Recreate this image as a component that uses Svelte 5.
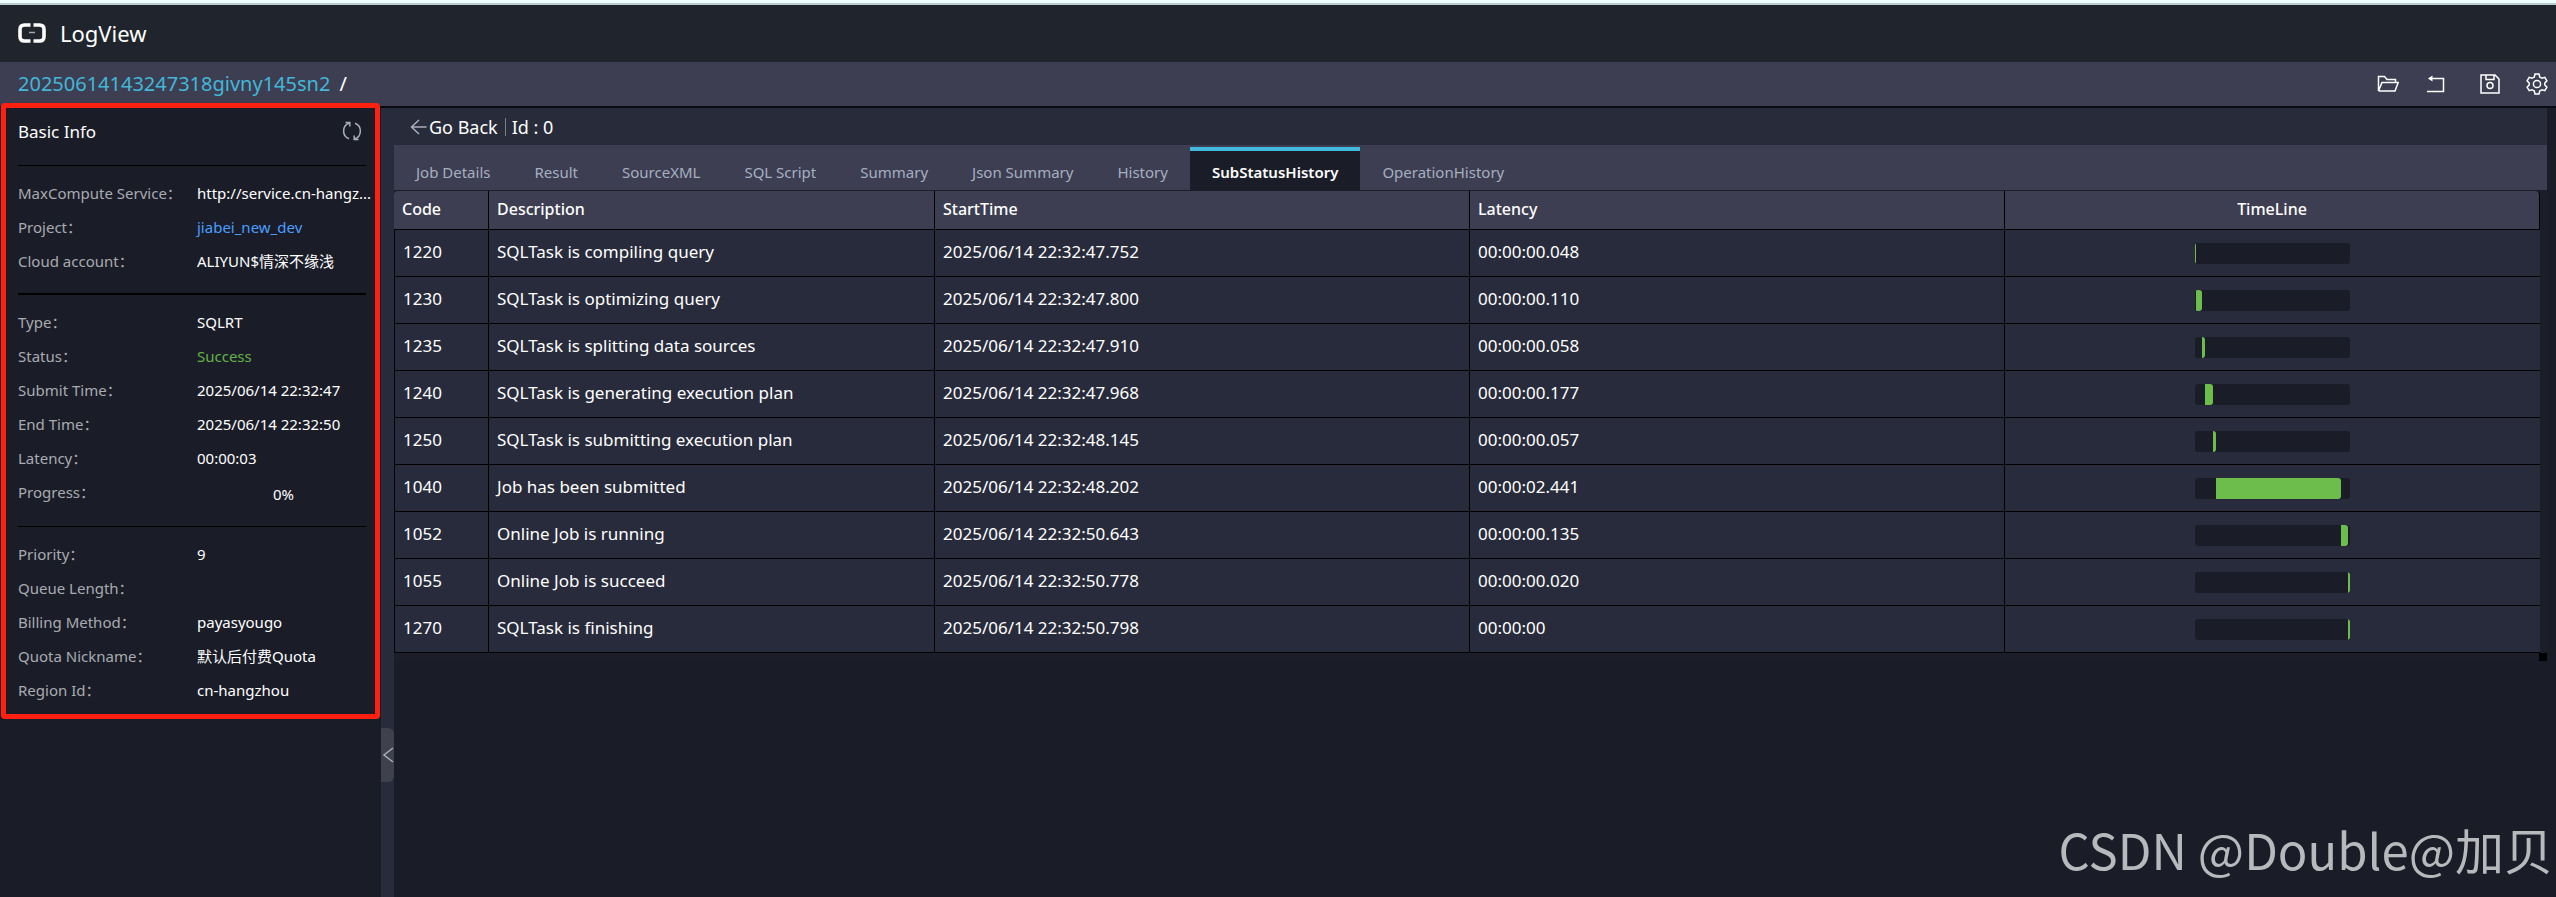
<script>
  const sections = [
    [
      { label: 'MaxCompute Service', value: 'http://service.cn-hangz...' },
      { label: 'Project', value: 'jiabei_new_dev', kind: 'link' },
      { label: 'Cloud account', value: 'ALIYUN$情深不缘浅' },
    ],
    [
      { label: 'Type', value: 'SQLRT' },
      { label: 'Status', value: 'Success', kind: 'success' },
      { label: 'Submit Time', value: '2025/06/14 22:32:47' },
      { label: 'End Time', value: '2025/06/14 22:32:50' },
      { label: 'Latency', value: '00:00:03' },
      { label: 'Progress', value: '0%', kind: 'progress' },
    ],
    [
      { label: 'Priority', value: '9' },
      { label: 'Queue Length', value: '' },
      { label: 'Billing Method', value: 'payasyougo' },
      { label: 'Quota Nickname', value: '默认后付费Quota' },
      { label: 'Region Id', value: 'cn-hangzhou' },
    ],
  ]

  const tabs = [
    'Job Details', 'Result', 'SourceXML', 'SQL Script', 'Summary',
    'Json Summary', 'History', 'SubStatusHistory', 'OperationHistory',
  ]
  let active = $state('SubStatusHistory')

  // offset and span are percentages of the whole run
  const rows = [
    { code: 1220, desc: 'SQLTask is compiling query', start: '2025/06/14 22:32:47.752', latency: '00:00:00.048', offset: 0, span: 0.7 },
    { code: 1230, desc: 'SQLTask is optimizing query', start: '2025/06/14 22:32:47.800', latency: '00:00:00.110', offset: 0.7, span: 3.8 },
    { code: 1235, desc: 'SQLTask is splitting data sources', start: '2025/06/14 22:32:47.910', latency: '00:00:00.058', offset: 4.4, span: 2 },
    { code: 1240, desc: 'SQLTask is generating execution plan', start: '2025/06/14 22:32:47.968', latency: '00:00:00.177', offset: 6.3, span: 5.3 },
    { code: 1250, desc: 'SQLTask is submitting execution plan', start: '2025/06/14 22:32:48.145', latency: '00:00:00.057', offset: 11.5, span: 2 },
    { code: 1040, desc: 'Job has been submitted', start: '2025/06/14 22:32:48.202', latency: '00:00:02.441', offset: 13.4, span: 80.8 },
    { code: 1052, desc: 'Online Job is running', start: '2025/06/14 22:32:50.643', latency: '00:00:00.135', offset: 94.1, span: 4.6 },
    { code: 1055, desc: 'Online Job is succeed', start: '2025/06/14 22:32:50.778', latency: '00:00:00.020', offset: 98.5, span: 1.5 },
    { code: 1270, desc: 'SQLTask is finishing', start: '2025/06/14 22:32:50.798', latency: '00:00:00', offset: 98.5, span: 1.5 },
  ]
</script>

<div class="page">
  <header class="brand">
    <svg class="logo" width="28" height="20" viewBox="0 0 28 20" aria-hidden="true">
      <path d="M12.5 2H6.5Q2 2 2 6.5V13.5Q2 18 6.5 18H12.5" />
      <path d="M15.5 2H21.5Q26 2 26 6.5V13.5Q26 18 21.5 18H15.5" />
      <path class="dash" d="M11 9.5H17" />
    </svg>
    <span>LogView</span>
  </header>

  <nav class="crumbs">
    <div class="path"><a href="#instance">20250614143247318givny145sn2</a><span>/</span></div>
    <div class="tools">
      <button aria-label="Open">
        <svg width="22" height="22" viewBox="0 0 22 22"><path d="M1.5 18V3.500H7.5L10 6.500H18.500V9.500M1.500 18L5 9.500H21.200L18 18H1.500" /></svg>
      </button>
      <button aria-label="Return">
        <svg width="22" height="22" viewBox="0 0 22 22"><path d="M5 5.500H19.500V18.500H3" /><path class="solid" d="M4 5.500L8.500 2.500V8.500Z" /></svg>
      </button>
      <button aria-label="Save" class="spaced">
        <svg width="22" height="22" viewBox="0 0 22 22"><path d="M2 2H16L20 6V20H2ZM7 2V6.500H15V2" /><circle cx="11" cy="12.500" r="3" /></svg>
      </button>
      <button aria-label="Settings">
        <svg width="22" height="22" viewBox="0 0 22 22"><path d="M9 1H13L13.700 4L16 5.300L18.800 4.400L20.900 7.900L18.800 10V12L20.900 14.100L18.800 17.600L16 16.700L13.700 18L13 21H9L8.300 18L6 16.700L3.200 17.600L1.100 14.100L3.200 12V10L1.100 7.900L3.200 4.400L6 5.300L8.300 4Z" /><circle cx="11" cy="11" r="3.600" /></svg>
      </button>
    </div>
  </nav>

  <div class="body">
    <aside>
      <div class="highlight"></div>
      <div class="title">
        <h2>Basic Info</h2>
        <button aria-label="Refresh">
          <svg width="20" height="20" viewBox="0 0 20 20"><path d="M7.500 2A8.300 8.300 0 0 0 7 17.700M12.500 18A8.300 8.300 0 0 0 13 2.300" /><path d="M3.500 1.500H7.800V5.500M16.500 18.500H12.200V14.500" /></svg>
        </button>
      </div>
      {#each sections as section}
        <dl>
          {#each section as item}
            <div class="info">
              <dt>{item.label}：</dt>
              <dd class={item.kind}>
                {#if item.kind === 'link'}<a href="#project">{item.value}</a>{:else}{item.value}{/if}
              </dd>
            </div>
          {/each}
        </dl>
      {/each}
    </aside>

    <div class="gutter">
      <button aria-label="Collapse">
        <svg width="13" height="18" viewBox="0 0 13 18"><path d="M12 2L3 9L12 16" /></svg>
      </button>
    </div>

    <main>
      <div class="back">
        <button>
          <svg width="18" height="16" viewBox="0 0 18 16"><path d="M16.500 8H1.500M9 1L1.500 8L9 15" /></svg>Go Back
        </button>
        <span class="sep"></span>
        <span>Id : 0</span>
      </div>

      <div class="tabs" role="tablist">
        {#each tabs as tab}
          <button role="tab" aria-selected={active === tab} class:active={active === tab} onclick={() => (active = tab)}>{tab}</button>
        {/each}
      </div>

      <div class="table-wrap">
        <table>
          <thead>
            <tr>
              <th class="code">Code</th>
              <th class="desc">Description</th>
              <th>StartTime</th>
              <th>Latency</th>
              <th class="timeline">TimeLine</th>
            </tr>
          </thead>
          <tbody>
            {#each rows as row}
              <tr>
                <td>{row.code}</td>
                <td>{row.desc}</td>
                <td>{row.start}</td>
                <td>{row.latency}</td>
                <td>
                  <div class="track">
                    <div class="fill" style="margin-left: {row.offset}%; width: {row.span}%"></div>
                  </div>
                </td>
              </tr>
            {/each}
          </tbody>
        </table>
        <div class="corner"></div>
      </div>
    </main>
  </div>

  <div class="watermark">CSDN @Double@加贝</div>
</div>

<style>
  :global(body) {
    background: #1a1d28;
  }

  .page {
    position: relative;
    display: flex;
    flex-direction: column;
    min-height: 100vh;
    box-sizing: border-box;
    border-top: 3px solid #effdfd;
    color: #fff;
    font-family: "Noto Sans", "Noto Sans CJK SC", sans-serif;
    font-size: 15px;
  }

  button {
    padding: 0;
    border: 0;
    background: none;
    color: inherit;
    font: inherit;
    cursor: pointer;
  }

  a {
    text-decoration: none;
  }

  svg {
    display: block;
    fill: none;
    stroke: #fff;
    stroke-width: 1.5;
  }

  .logo {
    stroke-width: 3.6;
  }

  .logo .dash {
    stroke: #a3a6ab;
    stroke-width: 1.5;
  }

  .brand {
    display: flex;
    align-items: center;
    gap: 14px;
    height: 55px;
    padding: 0 18px 2px;
    border-top: 2px solid #b9cdcd;
    background: #20242c;
    font-size: 22px;
  }

  .crumbs {
    display: flex;
    align-items: center;
    justify-content: space-between;
    height: 43px;
    padding: 0 8px 1px 18px;
    border-bottom: 2px solid #0a0b12;
    background: #3d3e52;
    font-size: 20px;
  }

  .crumbs a {
    color: #42b7d9;
  }

  .path {
    display: flex;
    gap: 9px;
  }

  .tools {
    display: flex;
    gap: 25px;
  }

  .tools .spaced {
    margin-left: 8px;
  }

  .tools .solid {
    fill: #fff;
    stroke: none;
  }

  .body {
    flex: 1;
    display: flex;
  }

  aside {
    position: relative;
    width: 381px;
    padding: 0 15px 0 18px;
    box-sizing: border-box;
    background: #1a1d28;
  }

  .highlight {
    position: absolute;
    inset: -5px 1px auto 1px;
    height: 606px;
    border: 5px solid #ff2010;
    border-radius: 4px;
    pointer-events: none;
  }

  .title {
    display: flex;
    align-items: center;
    justify-content: space-between;
    height: 46px;
    padding: 0 4px 11px 0;
  }

  h2 {
    margin: 0;
    font-size: 17px;
    font-weight: 400;
  }

  .title svg,
  .gutter svg,
  .back svg {
    stroke: #a9afba;
  }

  dl {
    margin: 0;
    padding: 10px 0 15px;
    border-top: 1px solid #000;
  }

  dl:nth-of-type(2) {
    padding-bottom: 17px;
    border-top-width: 2px;
  }

  .info {
    display: flex;
    height: 34px;
    line-height: 34px;
  }

  dt {
    width: 179px;
    flex: none;
    color: #a9abb0;
  }

  dd {
    flex: 1;
    margin: 0;
    white-space: nowrap;
  }

  dd a {
    color: #4a9dff;
  }

  .success {
    color: #62b146;
  }

  .progress {
    padding: 2px 0 0 4px;
    text-align: center;
  }

  .gutter {
    display: flex;
    align-items: flex-end;
    width: 13px;
    padding-bottom: 115px;
    background: #282b3b;
  }

  .gutter button {
    height: 54px;
    border-radius: 0 6px 6px 0;
    background: #3f414d;
  }

  main {
    flex: 1;
    min-width: 0;
    padding-right: 9px;
  }

  .back {
    display: flex;
    align-items: center;
    height: 37px;
    padding-left: 16px;
    background: #282b39;
    font-size: 18px;
  }

  .back button {
    display: flex;
    align-items: center;
    gap: 1px;
  }

  .sep {
    width: 1px;
    height: 18px;
    margin: 0 6px 0 7px;
    background: #7b8085;
  }

  .tabs {
    display: flex;
    height: 45px;
    border-bottom: 1px solid #1a1d28;
    background: #3d3e52;
  }

  .tabs button {
    padding: 9px 22px 0;
    color: #a5b0c0;
  }

  .tabs .active {
    margin-top: 2px;
    padding-top: 3px;
    border-top: 4px solid #42b9dc;
    background: #1a1d28;
    color: #fff;
    font-weight: 600;
  }

  .table-wrap {
    position: relative;
    padding: 0 7px 8px 0;
    background: #1b1e29;
  }

  table {
    width: 100%;
    border-spacing: 0;
    table-layout: fixed;
    font-size: 17px;
  }

  th {
    height: 38px;
    padding: 0 8px 2px;
    box-sizing: border-box;
    border-right: 1px solid #000;
    background: #3d3e52;
    font-size: 16px;
    font-weight: 500;
    text-align: left;
  }

  th:first-child {
    border-top-left-radius: 4px;
  }

  th:last-child {
    border-top-right-radius: 4px;
  }

  .code {
    width: 95px;
  }

  .desc {
    width: 446px;
  }

  .timeline {
    text-align: center;
  }

  td {
    height: 47px;
    padding: 0 8px 4px;
    box-sizing: border-box;
    border-top: 1px solid #000;
    border-right: 1px solid #000;
    background: #282b3b;
  }

  td:first-child {
    border-left: 1px solid #000;
  }

  td:last-child {
    border-right: 0;
  }

  tbody tr:last-child td {
    height: 48px;
    border-bottom: 1px solid #000;
  }

  .track {
    width: 155px;
    height: 21px;
    margin: 5px auto 0;
    border-radius: 3px;
    background: #1a1d28;
    overflow: hidden;
  }

  .fill {
    height: 100%;
    border-radius: 0 3px 3px 0;
    background: #6dbd4d;
  }

  .corner {
    position: absolute;
    right: 0;
    bottom: 0;
    width: 8px;
    height: 8px;
    background: #000;
  }

  .watermark {
    position: absolute;
    right: 3px;
    bottom: 12px;
    color: #b8b9bc;
    font-family: "Noto Sans CJK SC", sans-serif;
    font-size: 49px;
    line-height: 72px;
  }
</style>
